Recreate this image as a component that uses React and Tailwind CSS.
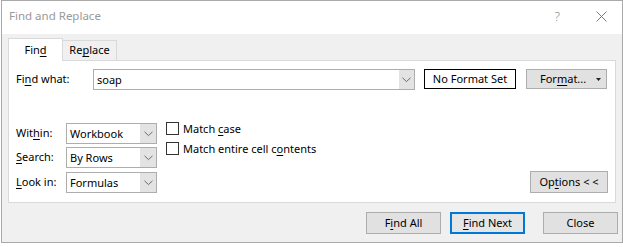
import React from "react";

const Chevron = () => (
  <svg width="9" height="6" viewBox="0 0 9 6" className="block">
    <path d="M0.5 0.8 L4.5 4.6 L8.5 0.8" fill="none" stroke="#6b6b6b" strokeWidth="1" />
  </svg>
);

const U = ({ children }) => (
  <span className="underline underline-offset-[2px] decoration-[1px]">{children}</span>
);

function Select({ value }) {
  return (
    <div className="flex h-[21px] w-[91px] border border-[#adadad] bg-white">
      <div className="flex-1 pl-[3px] leading-[19px]">{value}</div>
      <div className="flex w-[16px] items-center justify-center bg-[#e3e3e3]">
        <Chevron />
      </div>
    </div>
  );
}

function Btn({ children, w, primary }) {
  return (
    <div
      className={
        "flex h-[22px] items-center justify-center bg-[#e1e1e1] " +
        (primary ? "border-2 border-[#0078d7] bg-[#e5e5e5] " : "border border-[#adadad] ") +
        w
      }
    >
      {children}
    </div>
  );
}

function Check({ children }) {
  return (
    <div className="flex h-[13px] items-center">
      <div className="h-[13px] w-[13px] border border-[#333333] bg-white" />
      <div className="ml-[4px] leading-[13px]">{children}</div>
    </div>
  );
}

export default function App() {
  return (
    <div
      className="h-[247px] w-[623px] overflow-hidden bg-white text-[11px] text-black"
      style={{ fontFamily: '"Noto Sans", "Open Sans", sans-serif' }}
    >
      <div className="ml-[1px] flex h-[243px] w-[622px] flex-col border border-[#a9a9a9] bg-[#f0f0f0]">
        {/* Title bar */}
        <div className="flex h-[33px] items-center bg-white pb-[3px] pl-[7px]">
          <div className="text-[11.5px] text-[#999999] leading-none">Find and Replace</div>
          <div className="flex-1" />
          <div className="mr-[36px] text-[13px] font-light text-[#8a8a8a] leading-none">?</div>
          <svg width="11" height="11" viewBox="0 0 11 11" className="mr-[15px]">
            <path d="M0.5 0.5 L10.5 10.5 M10.5 0.5 L0.5 10.5" stroke="#7a7a7a" strokeWidth="1" />
          </svg>
        </div>

        {/* Body */}
        <div className="flex flex-1 flex-col pl-[6px] pt-[4px] pr-[4px]">
          {/* Tabs */}
          <div className="flex h-[22px] items-start">
            <div className="relative z-10 flex h-[23px] w-[55px] items-center justify-center border-l border-r border-t border-[#d9d9d9] bg-white">
              <span>
                Fin<U>d</U>
              </span>
            </div>
            <div className="mt-[2px] flex h-[20px] w-[54px] items-center justify-center border-r border-t border-[#d9d9d9] bg-[#f0f0f0]">
              <span>
                Re<U>p</U>lace
              </span>
            </div>
          </div>

          {/* Panel */}
          <div className="flex h-[143px] w-[608px] flex-col border border-[#d9d9d9] bg-white pl-[7px] pr-[7px] pt-[8px] pb-[9px]">
            {/* Find what row */}
            <div className="flex h-[21px] items-start">
              <div className="w-[77px] leading-[20px]">
                Fi<U>n</U>d what:
              </div>
              <div className="flex h-[21px] w-[322px] border border-[#adadad] bg-white">
                <div className="flex-1 pl-[3px] leading-[19px]">soap</div>
                <div className="flex w-[15px] items-center justify-center bg-[#e3e3e3]">
                  <Chevron />
                </div>
              </div>
              <div className="ml-[9px] flex h-[20px] w-[92px] items-center justify-center border border-black">
                No Format Set
              </div>
              <div className="ml-[10px] flex h-[20px] w-[81px] items-center border border-[#adadad] bg-[#e1e1e1]">
                <span className="ml-[13px]">
                  For<U>m</U>at...
                </span>
                <div className="flex-1" />
                <svg width="5" height="3" viewBox="0 0 5 3" className="mr-[5px]">
                  <path d="M0 0 L5 0 L2.5 3 Z" fill="#222222" />
                </svg>
              </div>
            </div>

            {/* Lower section */}
            <div className="mt-[32px] flex h-[71px] items-start">
              <div className="flex flex-col pt-[1px]">
                <div className="flex h-[21px] items-center">
                  <div className="w-[50px]">
                    Wit<U>h</U>in:
                  </div>
                  <Select value="Workbook" />
                </div>
                <div className="mt-[3px] flex h-[21px] items-center">
                  <div className="w-[50px]">
                    <U>S</U>earch:
                  </div>
                  <Select value="By Rows" />
                </div>
                <div className="mt-[4px] flex h-[21px] items-center">
                  <div className="w-[50px]">
                    <U>L</U>ook in:
                  </div>
                  <Select value="Formulas" />
                </div>
              </div>
              <div className="ml-[9px] flex flex-col gap-[7px]">
                <Check>
                  Match <U>c</U>ase
                </Check>
                <Check>
                  Match entire cell c<U>o</U>ntents
                </Check>
              </div>
              <div className="flex-1" />
              <div className="self-end">
                <Btn w="w-[78px]">
                  <span>
                    Op<U>t</U>ions &lt; &lt;
                  </span>
                </Btn>
              </div>
            </div>
          </div>

          {/* Bottom buttons */}
          <div className="mt-[9px] flex justify-end">
            <Btn w="w-[75px]">
              <span>
                F<U>i</U>nd All
              </span>
            </Btn>
            <div className="ml-[9px]">
              <Btn w="w-[75px]" primary>
                <span>
                  <U>F</U>ind Next
                </span>
              </Btn>
            </div>
            <div className="ml-[18px]">
              <Btn w="w-[75px]">
                <span>Close</span>
              </Btn>
            </div>
          </div>
        </div>
      </div>
    </div>
  );
}
